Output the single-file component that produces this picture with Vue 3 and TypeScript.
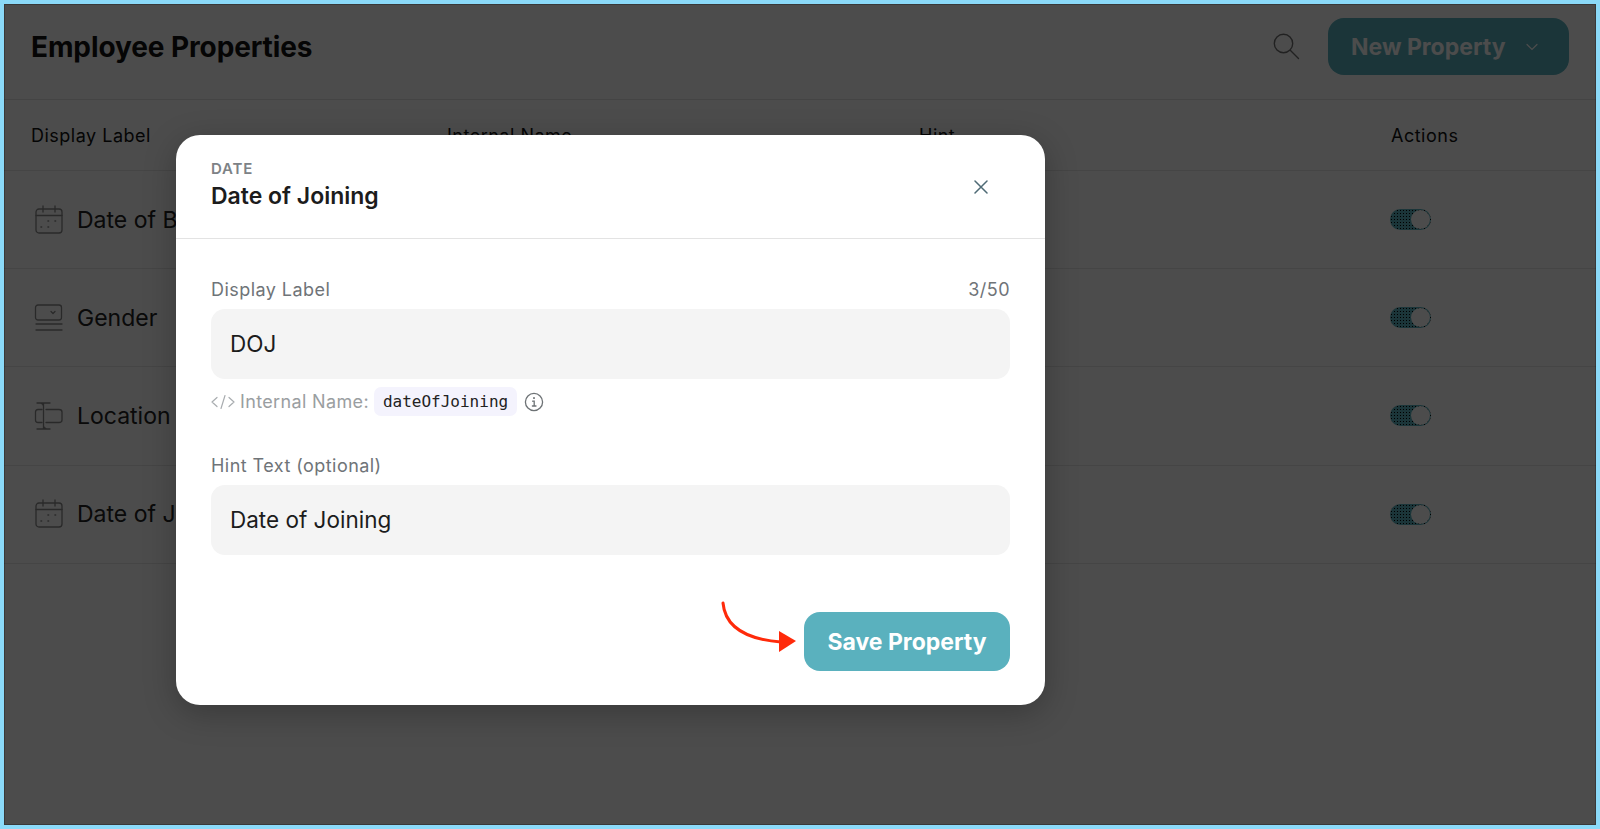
<script setup lang="ts">
interface Row { name: string; icon: 'date' | 'select' | 'text' }
const rows: Row[] = [
  { name: 'Date of Birth', icon: 'date' },
  { name: 'Gender', icon: 'select' },
  { name: 'Location', icon: 'text' },
  { name: 'Date of Joining', icon: 'date' },
]
</script>

<template>
  <div class="frame">
    <header class="top">
      <h1>Employee Properties</h1>
      <div class="top-actions">
        <svg class="search" width="30" height="30" viewBox="0 0 30 30" fill="none" stroke="#707070" stroke-width="1.4" stroke-linecap="round">
          <circle cx="12.5" cy="12.5" r="9.2" />
          <path d="M19.5 19.5 L27.5 27.5" />
        </svg>
        <button class="new-btn">
          <span>New Property</span>
          <svg width="12" height="8" viewBox="0 0 12 8" fill="none" stroke="#fff" stroke-width="1.2" stroke-linecap="round"><path d="M1 1.5 L6 6.5 L11 1.5" /></svg>
        </button>
      </div>
    </header>

    <div class="grid thead">
      <span>Display Label</span>
      <span>Internal Name</span>
      <span>Hint</span>
      <span>Actions</span>
    </div>

    <div v-for="r in rows" :key="r.name" class="grid row">
      <div class="name">
        <svg class="ticon" width="30" height="30" viewBox="0 0 30 30" fill="none" stroke="#8a8a8a" stroke-width="1.3" stroke-linecap="round" stroke-linejoin="round">
          <template v-if="r.icon === 'date'">
            <rect x="2" y="4" width="26" height="24" rx="3" />
            <path d="M2 10.5 H28 M9 1 V7 M21 1 V7" />
            <path d="M14 16h.6M21 16h.6M7 22h.6M14 22h.6" stroke-width="1.6" />
          </template>
          <template v-else-if="r.icon === 'select'">
            <rect x="1.5" y="2" width="26" height="15" rx="2.5" />
            <path d="M17 8.5 L19 10.5 L21 8.5 M2 21 H28 M2 27 H28" />
          </template>
          <template v-else>
            <path d="M8 8.5 H4 Q1.5 8.5 1.5 11 V19 Q1.5 21.5 4 21.5 H8 M12 8.5 H25 Q28 8.5 28 11 V19 Q28 21.5 25 21.5 H12" />
            <path d="M3 2 H16 M3 28 H16 M9.5 2 V28 M6 2 Q9.5 3 9.5 5 M13 28 Q9.5 27 9.5 25" />
          </template>
        </svg>
        <span>{{ r.name }}</span>
      </div>
      <span />
      <span />
      <span class="toggle"><i /></span>
    </div>

    <div class="overlay">
      <section class="modal">
        <div class="m-head">
          <div>
            <div class="eyebrow">DATE</div>
            <h2>Date of Joining</h2>
          </div>
          <svg class="close" width="14" height="14" viewBox="0 0 14 14" fill="none" stroke="#4e6a75" stroke-width="1.5" stroke-linecap="round"><path d="M1 1 L13 13 M13 1 L1 13" /></svg>
        </div>

        <div class="m-body">
          <div class="label-row">
            <label>Display Label</label>
            <span>3/50</span>
          </div>
          <div class="field">DOJ</div>

          <div class="internal">
            <svg width="24" height="16" viewBox="0 0 24 16" fill="none" stroke="#a9adb0" stroke-width="1.2" stroke-linecap="round" stroke-linejoin="round"><path d="M6 3.5 L1 8 L6 12.5 M18 3.5 L23 8 L18 12.5 M14 1.5 L10 14.5" /></svg>
            <span class="internal-label">Internal Name:</span>
            <code>dateOfJoining</code>
            <svg width="20" height="20" viewBox="0 0 20 20" fill="none" stroke="#6d7275" stroke-width="1.3" stroke-linecap="round"><circle cx="10" cy="10" r="8.6" /><path d="M8.6 9.2 H10.2 V14 M8.4 14 H12" /><path d="M10 5.8 v.4" stroke-width="1.8" /></svg>
          </div>

          <div class="label-row second">
            <label>Hint Text (optional)</label>
          </div>
          <div class="field">Date of Joining</div>

          <div class="m-foot">
            <div class="save-wrap">
              <svg class="arrow" width="80" height="60" viewBox="0 0 80 60" fill="none">
                <path d="M4 2 C6 24 24 38 62 41" stroke="#ff2a0a" stroke-width="3" stroke-linecap="round" />
                <path d="M60 30 L77 40 L60 51 Z" fill="#ff2a0a" />
              </svg>
              <button class="save">Save Property</button>
            </div>
          </div>
        </div>
      </section>
    </div>
  </div>
</template>

<style>
html, body { margin: 0; background: #4d4d4d; overflow: hidden; }
</style>

<style scoped>
.frame {
  position: relative;
  box-sizing: border-box;
  height: 829px;
  border: 4px solid #8bdaf9;
  background: #fff;
  font-family: Inter, "Liberation Sans", sans-serif;
  color: #111;
  overflow: hidden;
}
.top {
  height: 96px;
  box-sizing: border-box;
  padding: 14px 27px 0 27px;
  display: flex;
  align-items: flex-start;
  justify-content: space-between;
  border-bottom: 1px solid #e3e3e3;
}
h1 {
  margin: 12px 0 0;
  font-size: 28px;
  line-height: 34px;
  font-weight: 700;
  letter-spacing: -0.1px;
}
.top-actions { display: flex; align-items: center; gap: 27px; }
.search { margin-top: -2px; }
.new-btn {
  width: 241px;
  height: 57px;
  border: 0;
  border-radius: 16px;
  background: #5ab1be;
  color: #fff;
  font: 700 23px Inter, sans-serif;
  display: flex;
  align-items: center;
  padding: 0 0 0 23px;
  gap: 21px;
}
.new-btn span { width: 154px; white-space: nowrap; text-align: left; }
.grid {
  display: grid;
  grid-template-columns: 416px 472px 472px 1fr;
  padding-left: 27px;
  align-items: center;
  border-bottom: 1px solid #e8e8e8;
}
.thead { height: 71px; font-size: 18px; letter-spacing: 0.5px; box-sizing: border-box; }
.row { height: 98.2px; box-sizing: border-box; }
.name { display: flex; align-items: center; gap: 13px; font-size: 23px; color: #222; }
.ticon { flex: none; margin-left: 3px; }
.toggle {
  display: block;
  box-sizing: border-box;
  width: 41px;
  height: 21px;
  margin-left: -1px;
  border-radius: 11px;
  background-color: #5ab1be;
  background-image: radial-gradient(#000 0.8px, transparent 1px);
  background-size: 3px 3px;
  position: relative;
  overflow: hidden;
}
.toggle i {
  position: absolute;
  right: 1px;
  top: 1px;
  width: 19px;
  height: 19px;
  border-radius: 50%;
  background: #fff;
}
.overlay {
  position: absolute;
  inset: 0;
  background: rgba(0, 0, 0, 0.7);
  padding: 131px 0 0 172px;
  box-sizing: border-box;
  box-shadow: inset 0 0 0 1px rgba(0, 0, 0, 0.25);
}
.modal {
  width: 869px;
  height: 570px;
  box-sizing: border-box;
  background: #fff;
  border-radius: 24px;
  box-shadow: 0 8px 32px rgba(0, 0, 0, 0.25);
}
.m-head {
  height: 104px;
  box-sizing: border-box;
  padding: 25px 28px 0 35px;
  display: flex;
  justify-content: space-between;
  align-items: flex-start;
  border-bottom: 1px solid #e3e3e3;
}
.eyebrow { font-size: 15px; line-height: 18px; font-weight: 600; color: #7d8286; letter-spacing: 0.8px; }
h2 { margin: 4px 0 0; font-size: 23px; line-height: 28px; font-weight: 600; color: #1c1c1c; }
.close { margin: 20px 29px 0 0; }
.m-body { padding: 0 35px; }
.label-row {
  margin-top: 39px;
  height: 23px;
  display: flex;
  justify-content: space-between;
  align-items: center;
  font-size: 18px;
  color: #6f7478;
  padding-bottom: 8px;
  letter-spacing: 0.45px;
}
.label-row.second { margin-top: 38px; }
.field {
  height: 70px;
  box-sizing: border-box;
  border-radius: 14px;
  background: #f4f4f4;
  padding: 0 19px 2px;
  display: flex;
  align-items: center;
  font-size: 22.5px;
  color: #1c1c1c;
}
.internal {
  margin-top: 8px;
  height: 29px;
  display: flex;
  align-items: center;
  font-size: 18px;
  color: #9a9ea1;
}
.internal-label { margin-left: 5px; letter-spacing: 0.35px; }
code {
  margin: 0 7px 0 5px;
  height: 29px;
  box-sizing: border-box;
  padding: 0 9px;
  border-radius: 7px;
  background: #f4f3fd;
  display: flex;
  align-items: center;
  font: 16px "DejaVu Sans Mono", monospace;
  color: #222;
}
.m-foot { display: flex; justify-content: flex-end; margin-top: 57px; }
.save-wrap { position: relative; }
.arrow { position: absolute; left: -85px; top: -11px; }
.save {
  display: block;
  width: 206px;
  height: 59px;
  border: 0;
  border-radius: 16px;
  background: #5ab1be;
  color: #fff;
  font: 700 23px Inter, sans-serif;
}
</style>
